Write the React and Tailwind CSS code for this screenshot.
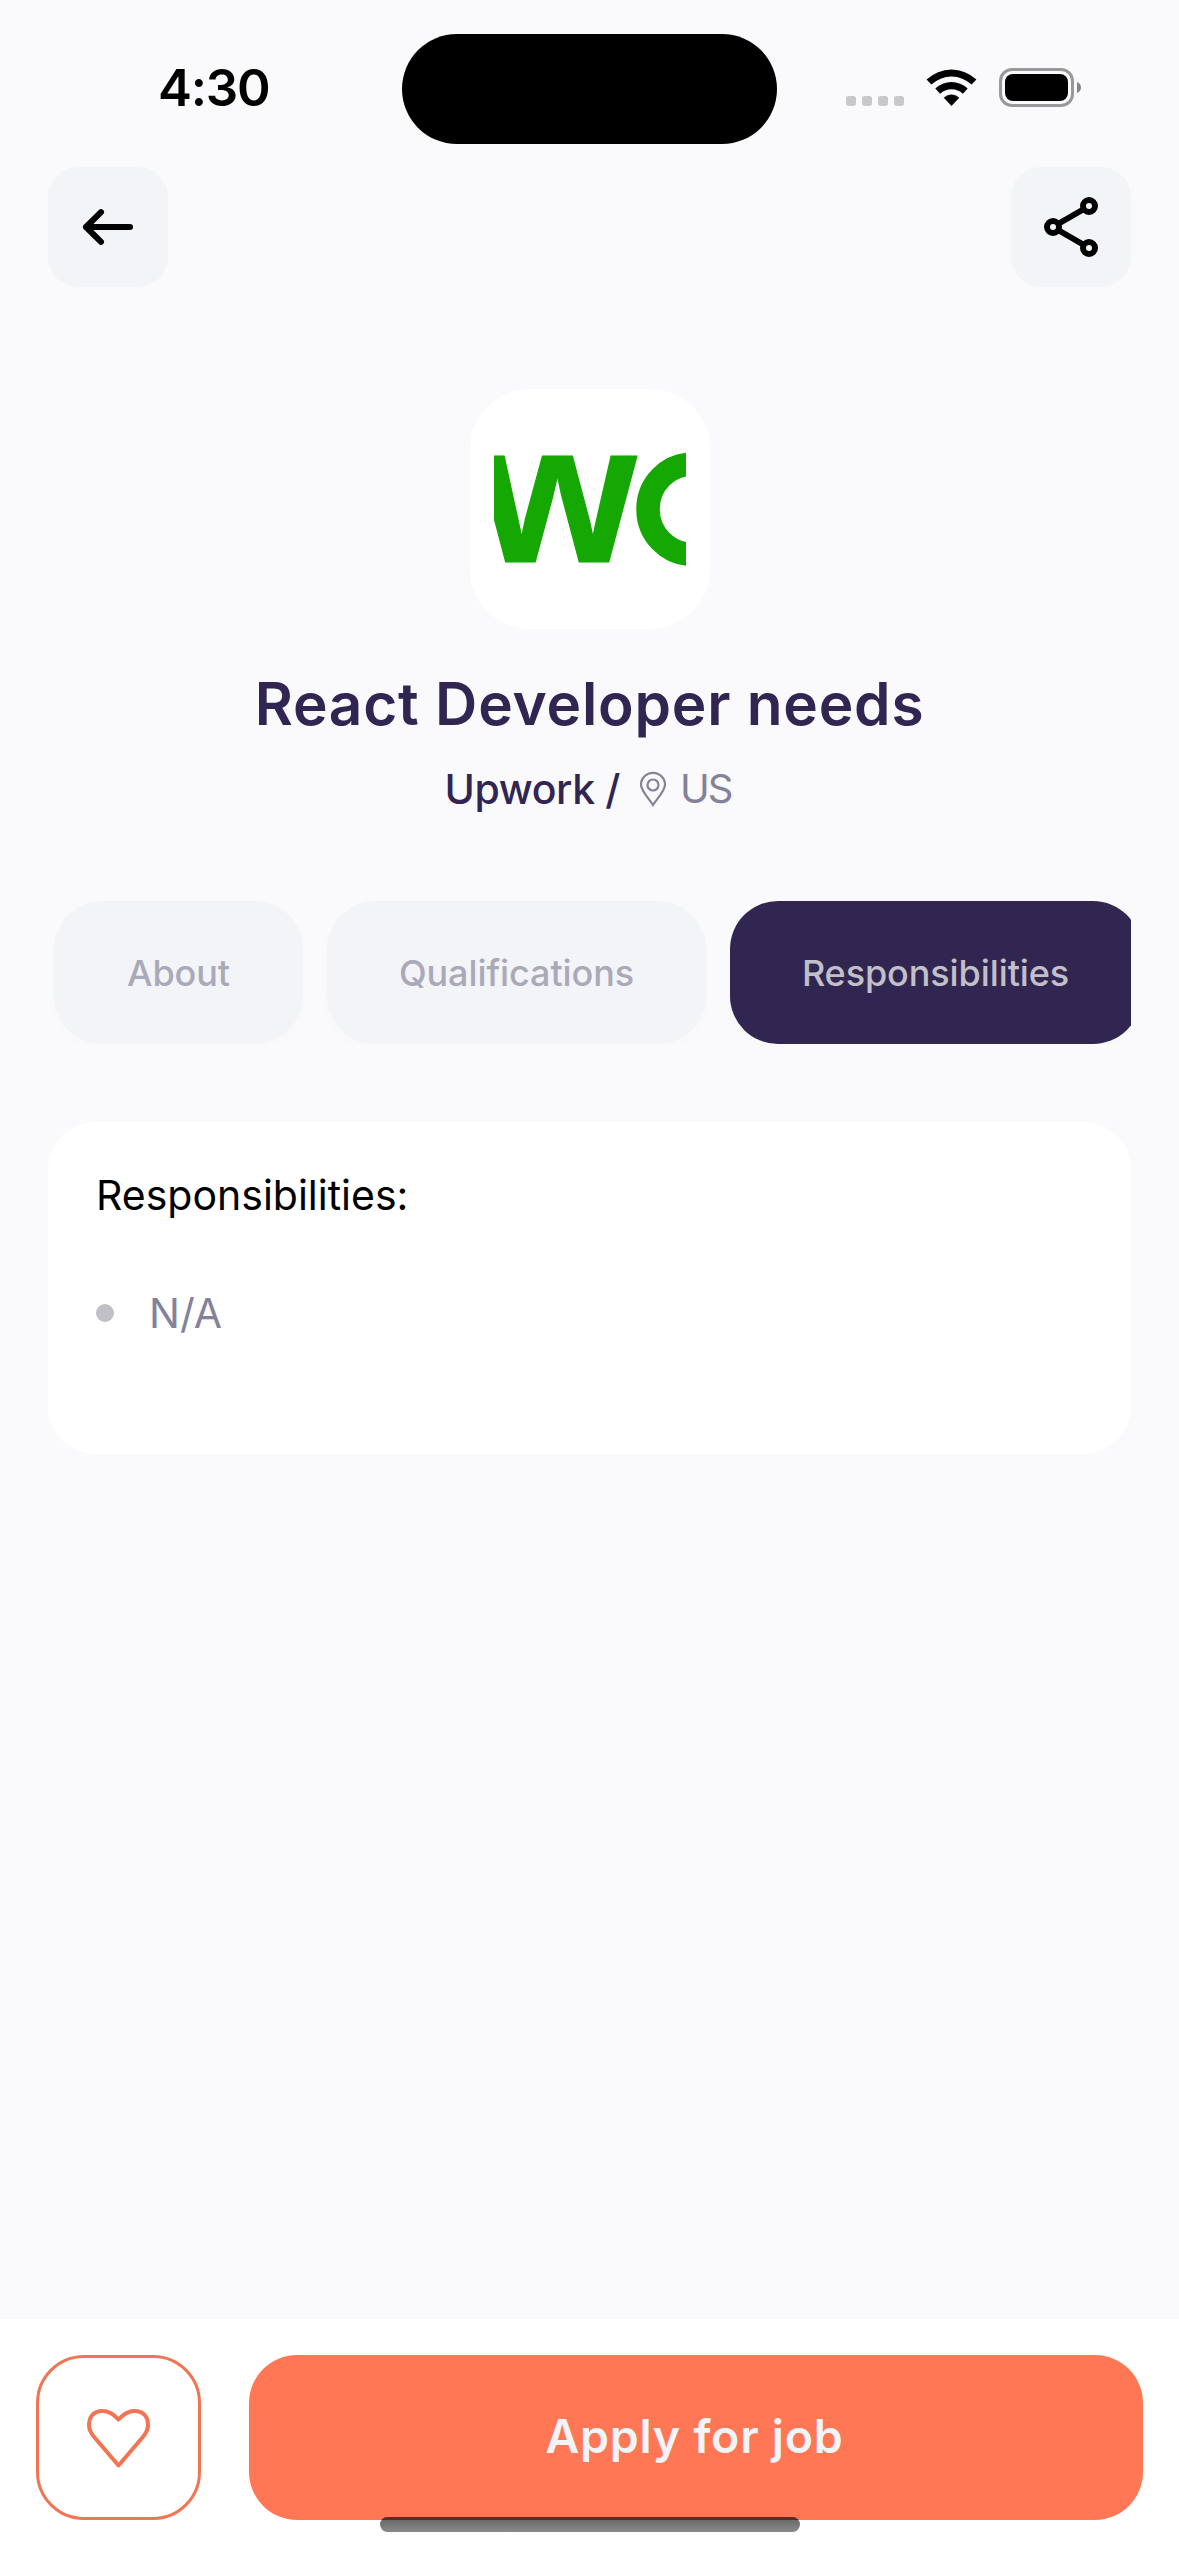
const FONT = "font-['Inter','Open_Sans',sans-serif]";

function StatusBar() {
  return (
    <div className="flex h-[167px] shrink-0 items-start">
      <div className="w-[402px] pl-[158px] pt-[58px]">
        <span className="block whitespace-nowrap text-[51px] font-semibold leading-[60px] tracking-[-1.2px] text-black">4:30</span>
      </div>
      <div className="mt-[34px] h-[110px] w-[375px] rounded-[55px] bg-black" />
      <div className="flex pl-[69px] pt-[68px]">
        <div className="mt-[28px] flex h-[10px] gap-[6px]">
          <i className="size-[10px] rounded-[3px] bg-[#c8c8ca]" />
          <i className="size-[10px] rounded-[3px] bg-[#c8c8ca]" />
          <i className="size-[10px] rounded-[3px] bg-[#c8c8ca]" />
          <i className="size-[10px] rounded-[3px] bg-[#c8c8ca]" />
        </div>
        <svg className="ml-[22px] mt-px h-[37px] w-[51px]" viewBox="0 0 51 37">
          <path d="M.6 10.6a36 36 0 0 1 49.8 0L45.6 15.600a29.200 29.200 0 0 0-40.200 0Z" fill="#000" />
          <path d="M9.300 19.600a23.400 23.400 0 0 1 32.400 0L36.900 24.700a16.500 16.500 0 0 0-22.800 0Z" fill="#000" />
          <path d="M18 28.700a11 11 0 0 1 15 0L25.500 36.700Z" fill="#000" stroke="#000" strokeWidth=".5" />
        </svg>
        <div className="ml-[22px] h-[39px] w-[75px] rounded-[13px] border-[3px] border-[#999999] p-[3px]">
          <div className="h-full w-full rounded-[8px] bg-black" />
        </div>
        <svg className="ml-[3px] mt-[14px] h-[11px] w-[4px]" viewBox="0 0 4 11"><path d="M0 0C5.300 2 5.300 9 0 11Z" fill="#858585" /></svg>
      </div>
    </div>
  );
}

function Header() {
  return (
    <div className="flex h-[120px] shrink-0 justify-between px-[48px]">
      <button className="size-[120px] rounded-[30px] bg-[#f3f4f8]" aria-label="Back">
        <svg viewBox="0 0 120 120" className="size-[120px]" fill="none" stroke="#000" strokeWidth="6" strokeLinecap="round" strokeLinejoin="round">
          <path d="M53 45.200 38 60 53 74.800M38 60H82" />
        </svg>
      </button>
      <button className="size-[120px] rounded-[30px] bg-[#f3f4f8]" aria-label="Share">
        <svg viewBox="0 0 120 120" className="size-[120px]" fill="none" stroke="#000" strokeWidth="6">
          <circle cx="42" cy="60" r="6" /><circle cx="78" cy="39" r="6" /><circle cx="78" cy="81" r="6" />
          <path d="M47 57 73 42M47 63 73 78" />
        </svg>
      </button>
    </div>
  );
}

function Company() {
  return (
    <div className="mt-[102px] flex shrink-0 flex-col items-center">
      <div className="flex size-[240px] items-center justify-center rounded-[60px] bg-white">
        <svg viewBox="0 0 192 192" className="size-[192px] overflow-hidden">
          <text x="-15.500" y="148.800" textLength="158" lengthAdjust="spacingAndGlyphs" fill="#16a802" stroke="#16a802" strokeWidth="1.200" fontFamily="Liberation Sans" fontWeight="700" fontSize="200">w</text>
          <ellipse cx="198" cy="96.200" rx="44" ry="45" fill="none" stroke="#16a802" strokeWidth="23.500" />
        </svg>
      </div>
      <h1 className="mt-[39px] whitespace-nowrap text-[58.500px] font-semibold leading-[72px] tracking-[0.8px] text-[#312651]">React Developer needs</h1>
      <div className="mt-[20px] flex h-[58px] items-center whitespace-nowrap text-[41px] leading-[58px]">
        <span className="font-medium tracking-[-0.4px] text-[#312651]">Upwork /</span>
        <svg viewBox="0 0 28 36" className="ml-[19px] h-[36px] w-[28px]" fill="none" stroke="#83829a" strokeWidth="2.2">
          <path d="M14 34C10 27.500 2 20 2 13.800a12 12 0 0 1 24 0C26 20 18 27.500 14 34Z" />
          <circle cx="14" cy="14" r="5.500" />
        </svg>
        <span className="ml-[13px] mr-[3px] text-[40px] font-normal tracking-[-2px] text-[#83829a]">US</span>
      </div>
    </div>
  );
}

const tab = "flex h-[143px] shrink-0 items-center justify-center whitespace-nowrap rounded-[48px] text-[36px] font-medium tracking-[-0.1px] shadow-[0_6px_16px_rgba(49,38,81,0.01)]";

function Tabs() {
  return (
    <div className="mx-[48px] mt-[83px] flex h-[143px] shrink-0 gap-[24px] overflow-hidden pl-[6px]">
      <div className={tab + " w-[249px] bg-[#f3f4f8] text-[#aaa9b8]"}>About</div>
      <div className={tab + " w-[379px] bg-[#f3f4f8] text-[#aaa9b8]"}>Qualifications</div>
      <div className={tab + " w-[411px] bg-[#312651] text-[#c1c0c8]"}>Responsibilities</div>
    </div>
  );
}

function Responsibilities() {
  return (
    <section className="mx-[48px] mt-[78px] h-[332px] shrink-0 rounded-[48px] bg-white px-[48px] pt-[48px]">
      <h2 className="whitespace-nowrap text-[41px] leading-[50px] text-black">Responsibilities:</h2>
      <div className="mt-[68px] flex items-center">
        <i className="size-[18px] rounded-full bg-[#c1c0c8]" />
        <p className="ml-[35px] whitespace-nowrap text-[41px] leading-[50px] text-[#83829a]">N/A</p>
      </div>
    </section>
  );
}

function Footer() {
  return (
    <footer className="relative mt-auto flex h-[237px] shrink-0 gap-[48px] bg-white px-[36px] pt-[36px]">
      <button className="flex size-[165px] items-center justify-center rounded-[48px] border-[3px] border-[#f37453]" aria-label="Save">
        <svg viewBox="0 0 63 60" className="h-[60px] w-[63px]" fill="none" stroke="#f37453" strokeWidth="4" strokeLinejoin="round">
          <path d="M31.500 11.500C20 -1.500 2 .500 2 17.200C2 22.500 4.500 26 8 30L31.500 57.500L55 30C58.500 26 61 22.500 61 17.200C61 .500 43 -1.500 31.500 11.500Z" />
        </svg>
      </button>
      <button className="flex h-[165px] w-[894px] items-center justify-center whitespace-nowrap rounded-[48px] bg-[#ff7754] pb-[3px] pr-[3px] text-[46.500px] font-semibold leading-[60px] tracking-[0.75px] text-[#f3f4f8]">Apply for job</button>
      <div className="absolute left-[380px] top-[198px] h-[15px] w-[420px] overflow-hidden rounded-[7.5px] bg-linear-to-b from-[#646464] to-[#8a8a8a]">
        <div className="h-[3px] bg-[#5c2c20]" />
      </div>
    </footer>
  );
}

export default function App() {
  return (
    <main className={FONT + " flex h-[2556px] w-[1179px] flex-col overflow-hidden bg-[#fafafc]"}>
      <StatusBar />
      <Header />
      <Company />
      <Tabs />
      <Responsibilities />
      <Footer />
    </main>
  );
}
